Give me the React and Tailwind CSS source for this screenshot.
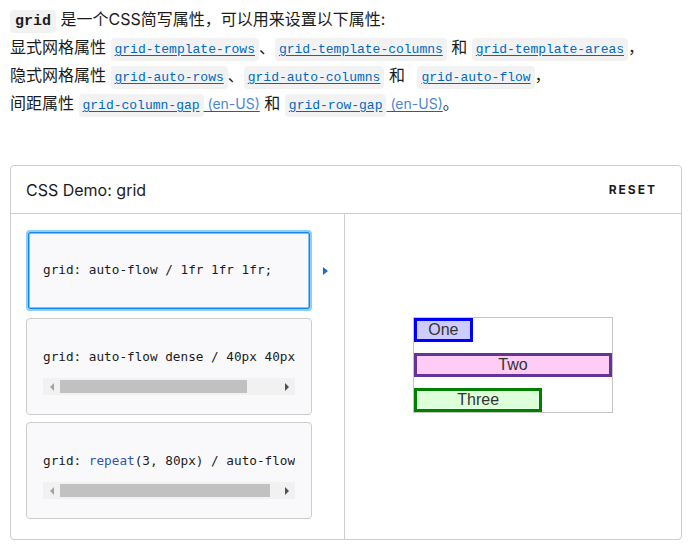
import React from "react";

const sans = { fontFamily: '"Inter", "Noto Sans CJK SC", sans-serif' };

// inline code chip inside the intro text, optionally wrapped in a link
const Chip = ({ children, className = "" }) => (
  <code
    className={`rounded-[4px] bg-[#f2f2f2] px-[4px] py-[4px] text-[13px] leading-none ${className}`}
    style={{ fontFamily: '"Liberation Mono", monospace' }}
  >
    {children}
  </code>
);

const Link = ({ children, enUS = false, className = "" }) => (
  <a href="#" className={`leading-none text-[#0069c2] underline underline-offset-2 ${className}`}>
    <Chip>{children}</Chip>
    {enUS && <span className="text-[14px] leading-none text-[#4d86d6]"> (en-US)</span>}
  </a>
);

// fake horizontal scrollbar drawn under the overflowing code
const Scrollbar = ({ thumb }) => (
  <div className="mt-[11px] flex h-[17px] items-center bg-[#f1f1f1]">
    <div className="flex w-[17px] justify-center">
      <span className="h-0 w-0 border-y-[4px] border-r-[4px] border-y-transparent border-r-[#a3a3a3]" />
    </div>
    <div className="h-[13px] bg-[#c1c1c1]" style={{ width: thumb }} />
    <div className="flex-1" />
    <div className="flex w-[17px] justify-center">
      <span className="h-0 w-0 border-y-[4px] border-l-[4px] border-y-transparent border-l-[#505050]" />
    </div>
  </div>
);

const mono = { fontFamily: '"DejaVu Sans Mono", monospace' };

const Example = ({ children, selected, scroll }) => (
  <div
    className={`w-[286px] rounded-[4px] bg-[#f9f9fb] ${
      selected
        ? "border-2 border-[#8fcdfa] px-[15px] pt-[28px] pb-[29px] shadow-[inset_0_0_0_1.5px_#1088f0]"
        : "border border-[#cdcdcd] px-[16px] pt-[28px] pb-[19px]"
    }`}
  >
    <div
      className="h-[20px] overflow-hidden whitespace-nowrap text-[12.7px] leading-[20px] text-[#1b1b1b]"
      style={mono}
    >
      {children}
    </div>
    {scroll && <Scrollbar thumb={scroll} />}
  </div>
);

export default function App() {
  return (
    <div className="min-h-[547px] bg-white text-[#1b1b1b]" style={sans}>
      <div className="px-[10px] pt-[5px] text-[16px] leading-[28px]">
        <div className="h-[28px]">
          <code
            className="rounded-[4px] bg-[#f2f2f2] px-[5px] py-[3px] text-[15px] font-bold leading-none"
            style={{ fontFamily: '"Liberation Mono", monospace' }}
          >
            grid
          </code>{" "}
          是一个CSS简写属性，可以用来设置以下属性:
        </div>
        <div className="h-[28px]">
          显式网格属性 <Link>grid-template-rows</Link>、<Link>grid-template-columns</Link> 和{" "}
          <Link>grid-template-areas</Link>，
        </div>
        <div className="h-[28px]">
          隐式网格属性 <Link>grid-auto-rows</Link>、<Link>grid-auto-columns</Link> 和{" "}
          <Link className="ml-[8px]">grid-auto-flow</Link>，
        </div>
        <div className="h-[28px]">
          间距属性 <Link enUS>grid-column-gap</Link> 和 <Link enUS>grid-row-gap</Link>。
        </div>
      </div>

      <div className="mx-[10px] mt-[48px] rounded-[4px] border border-[#cdcdcd]">
        <div className="flex h-[48px] items-center justify-between border-b border-[#cdcdcd] pl-[15px] pr-[24px]">
          <span className="text-[16px] text-[#1b1b1b]">CSS Demo: grid</span>
          <span className="text-[12px] font-bold tracking-[2px] text-[#1b1b1b]">RESET</span>
        </div>
        <div className="flex">
          <div className="flex w-[334px] flex-col gap-[7px] border-r border-[#cdcdcd] pl-[15px] pt-[16px] pb-[20px]">
            <div className="flex items-center">
              <Example selected>grid: auto-flow / 1fr 1fr 1fr;</Example>
              <span className="ml-[11px] h-0 w-0 border-y-[4px] border-l-[5px] border-y-transparent border-l-[#1a6bd6]" />
            </div>
            <Example scroll="187px">grid: auto-flow dense / 40px 40px 1fr;</Example>
            <Example scroll="210px">
              grid: <span className="text-[#2f55b0]">repeat</span>(3, 80px) / auto-flow;
            </Example>
          </div>
          <div className="flex flex-1 items-center justify-center pb-[24px]">
            <div
              className="grid w-[200px] auto-rows-[24px] grid-cols-3 gap-[11px] border border-[#c5c5c5] text-[16px] text-[#333]"
              style={{ fontFamily: '"Liberation Sans", Arial, sans-serif' }}
            >
              <div className="flex items-center justify-center border-[3px] border-[#0000ff] bg-[#ccccff]">One</div>
              <div className="col-span-3 flex items-center justify-center border-[3px] border-[#663399] bg-[#ffccf5]">
                Two
              </div>
              <div className="col-span-2 flex items-center justify-center border-[3px] border-[#008000] bg-[#ddffd9]">
                Three
              </div>
            </div>
          </div>
        </div>
      </div>
    </div>
  );
}
